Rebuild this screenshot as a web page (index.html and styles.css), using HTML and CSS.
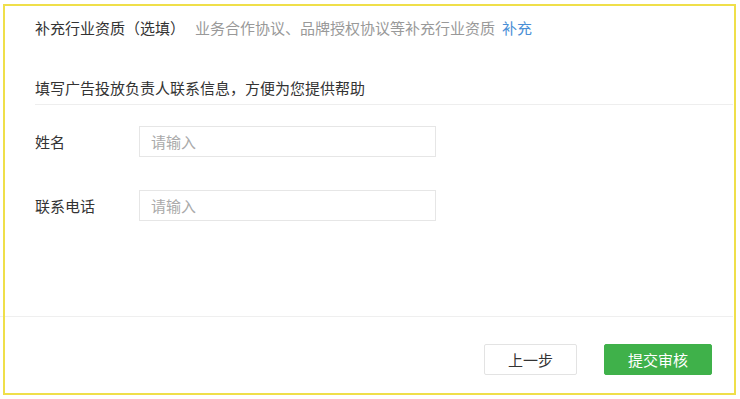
FILE: index.html
```html
<!DOCTYPE html>
<html lang="zh-CN">
<head>
<meta charset="utf-8">
<link rel="stylesheet" href="styles.css">
</head>
<body>
<div class="page">
  <div class="qual">
    <span class="qual-title">补充行业资质（选填）</span>
    <span class="qual-desc">业务合作协议、品牌授权协议等补充行业资质</span>
    <a class="qual-link">补充</a>
  </div>
  <div class="section">
    <div class="section-title">填写广告投放负责人联系信息，方便为您提供帮助</div>
    <div class="form">
      <div class="form-row">
        <label class="form-label">姓名</label>
        <input class="form-input" type="text" placeholder="请输入">
      </div>
      <div class="form-row">
        <label class="form-label">联系电话</label>
        <input class="form-input" type="text" placeholder="请输入">
      </div>
    </div>
  </div>
  <div class="footer">
    <button class="btn btn-default">上一步</button>
    <button class="btn btn-primary">提交审核</button>
  </div>
  <div class="highlight"></div>
</div>
</body>
</html>
```

FILE: styles.css
```css
* { box-sizing: border-box; }
html, body { margin: 0; padding: 0; background: #fff; }
body {
  font-family: "Noto Sans CJK SC", "Microsoft YaHei", sans-serif;
  font-size: 15px;
  color: #333;
}
.page {
  position: relative;
  width: 740px;
  height: 399px;
  overflow: hidden;
}
.qual {
  display: flex;
  align-items: center;
  padding: 17px 0 0 35px;
  height: 38px;
  line-height: 21px;
}
.qual-title { color: #333; }
.qual-desc { color: #999; margin-left: 10px; }
.qual-link { color: #4a8fd6; margin-left: 7px; cursor: pointer; }

.section {
  margin: 39px 7px 0 35px;
}
.section-title {
  line-height: 21px;
  padding-bottom: 6px;
  border-bottom: 1px solid #eeeeee;
}
.form {
  padding-top: 21px;
  display: flex;
  flex-direction: column;
  gap: 33px;
}
.form-row {
  display: flex;
  align-items: center;
  height: 31px;
}
.form-label {
  width: 104px;
  color: #333;
}
.form-input {
  width: 297px;
  height: 31px;
  border: 1px solid #e6e6e6;
  border-radius: 0;
  padding: 0 11px;
  font-family: inherit;
  font-size: 15px;
  color: #333;
  outline: none;
}
.form-input::placeholder { color: #aaa; }

.footer {
  margin-top: 95px;
  margin-right: 7px;
  border-top: 1px solid #efefef;
  padding: 27px 21px 0 0;
  display: flex;
  justify-content: flex-end;
  gap: 27px;
}
.btn {
  height: 31px;
  font-family: inherit;
  font-size: 15px;
  border-radius: 2px;
  padding: 0;
  cursor: pointer;
}
.btn-default {
  width: 93px;
  background: #fff;
  color: #333;
  border: 1px solid #e3e3e3;
}
.btn-primary {
  width: 108px;
  background: #3fb14a;
  color: #fff;
  border: 1px solid #3fb14a;
}
.highlight {
  position: absolute;
  left: 3px;
  top: 4px;
  width: 733px;
  height: 391px;
  border: 2px solid #efdf4a;
  pointer-events: none;
}
```
